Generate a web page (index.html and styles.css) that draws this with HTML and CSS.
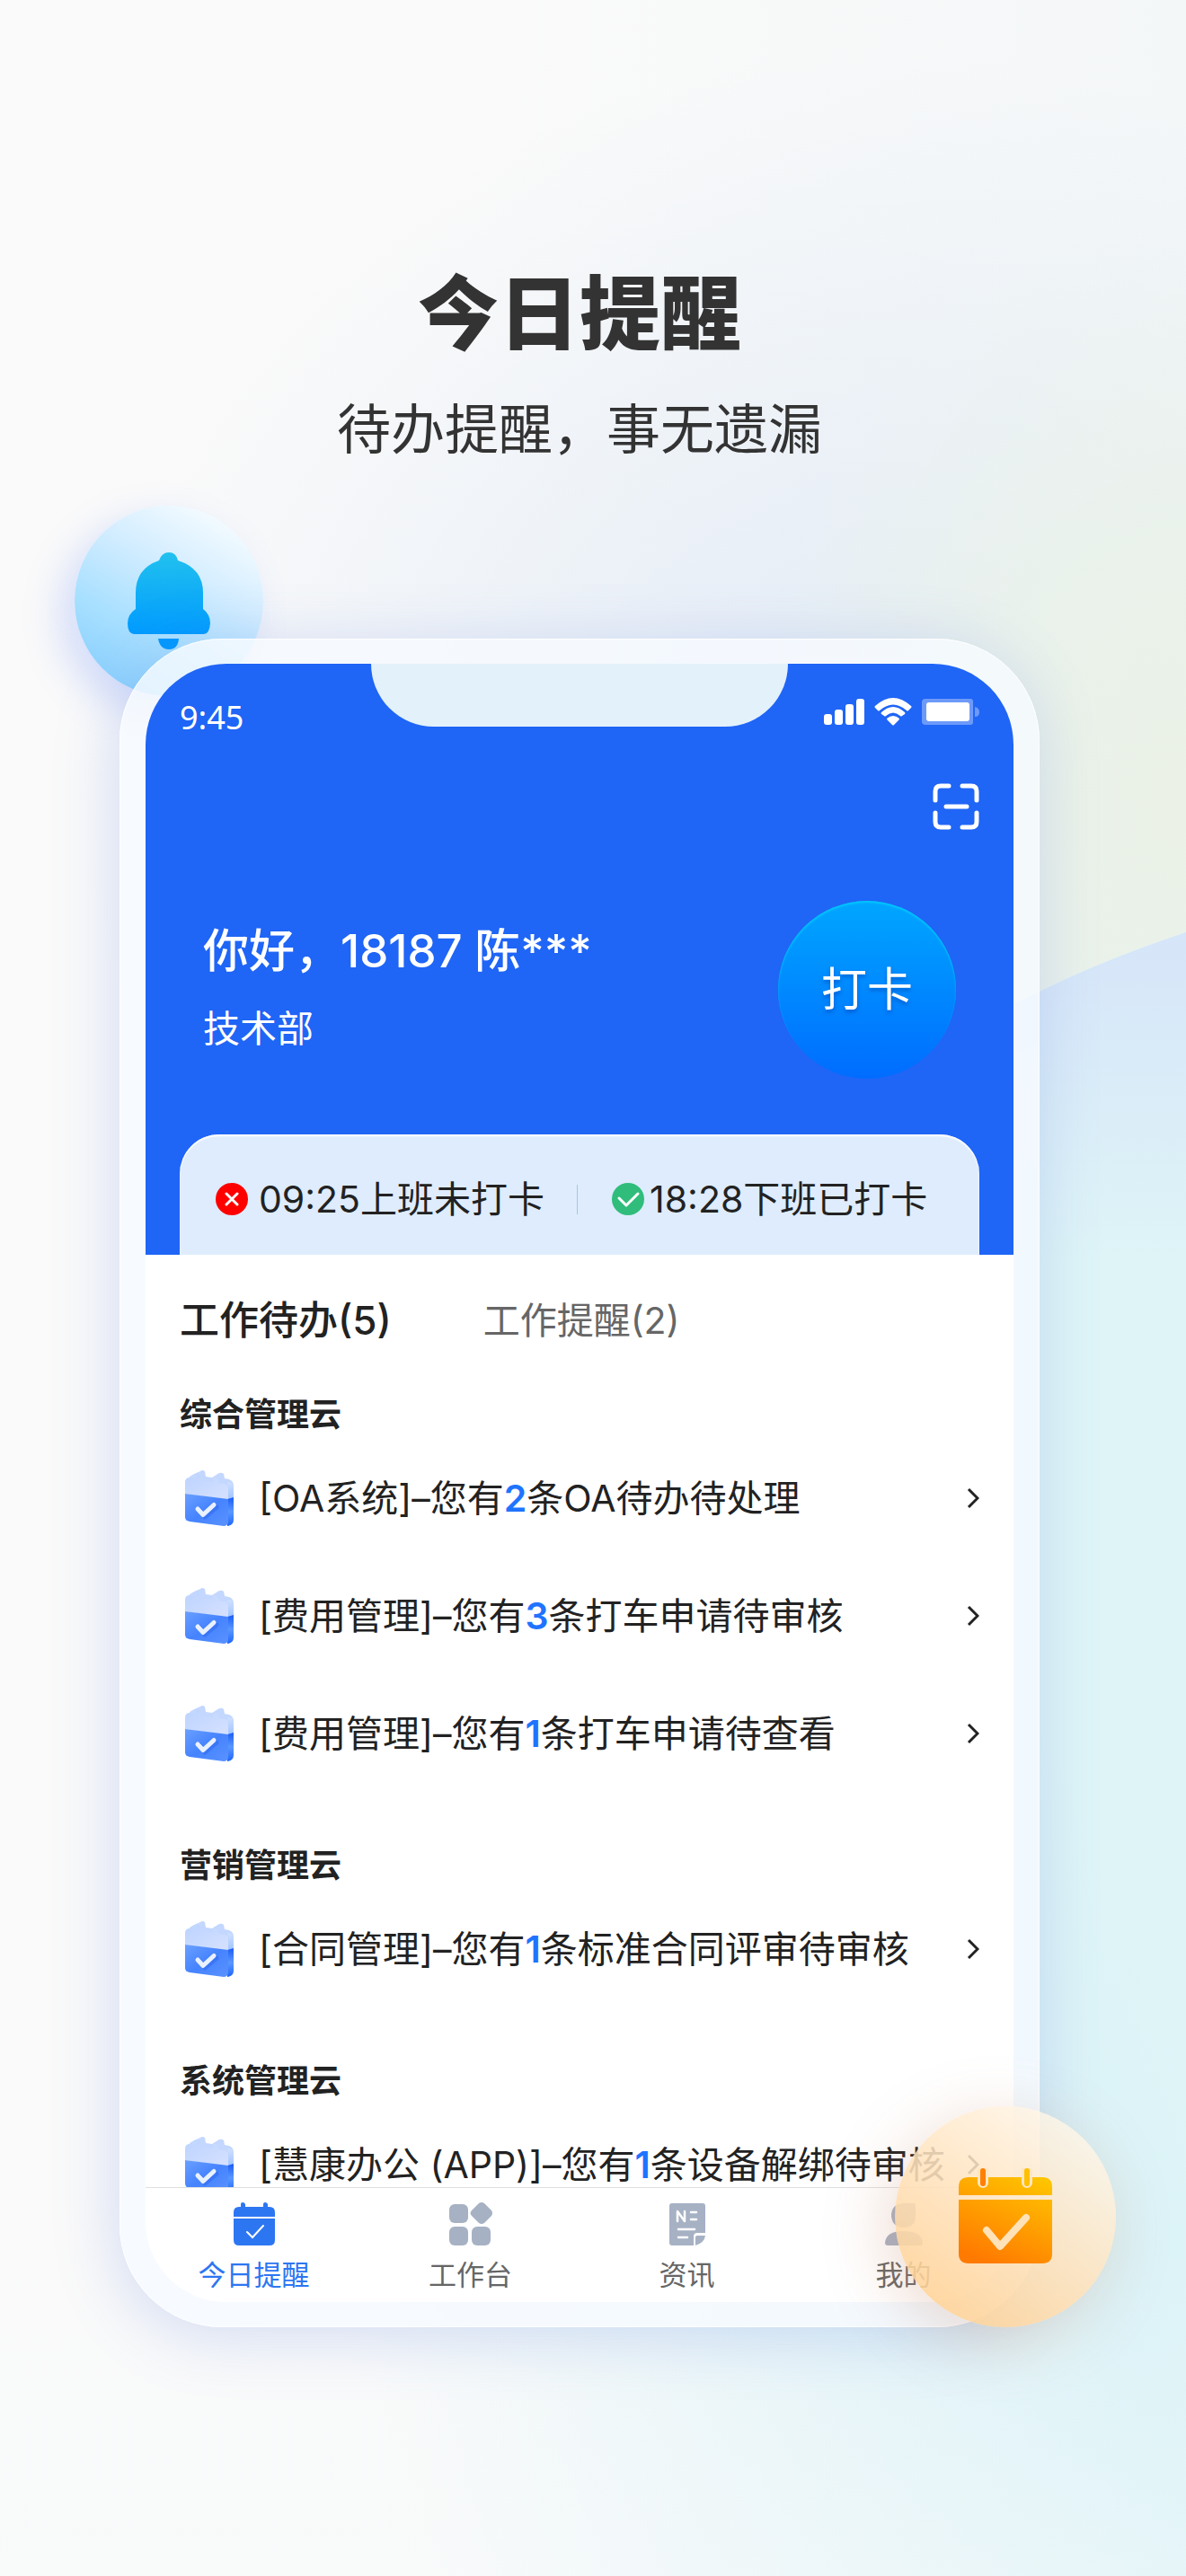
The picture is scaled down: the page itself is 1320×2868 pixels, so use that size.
FILE: index.html
```html
<!DOCTYPE html>
<html lang="zh-CN">
<head>
<meta charset="utf-8">
<meta name="viewport" content="width=device-width, initial-scale=1">
<title>今日提醒</title>
<link rel="stylesheet" href="styles.css">
</head>
<body>
<svg class="defs" width="0" height="0" aria-hidden="true">
  <defs>
    <linearGradient id="gTop" x1="0" y1="0" x2="1" y2="1"><stop offset="0" stop-color="#bcd3ff"/><stop offset="1" stop-color="#d6e1ff"/></linearGradient>
    <linearGradient id="gFront" x1="0" y1="0" x2="1" y2="1"><stop offset="0" stop-color="#6ba0ff"/><stop offset=".5" stop-color="#4583ff"/><stop offset="1" stop-color="#5a92ff"/></linearGradient>
    <linearGradient id="gSide" x1="0" y1="0" x2="0" y2="1"><stop offset="0" stop-color="#1b5cf5"/><stop offset=".5" stop-color="#5a98ff"/><stop offset="1" stop-color="#1f66fb"/></linearGradient>
    <linearGradient id="gSideTop" x1="0" y1="0" x2="0" y2="1"><stop offset="0" stop-color="#cfe0ff"/><stop offset="1" stop-color="#9fc3ff"/></linearGradient>
    <linearGradient id="gBell" x1="0" y1="0" x2="0" y2="1"><stop offset="0" stop-color="#22c1ee"/><stop offset="1" stop-color="#009bff"/></linearGradient>
    <linearGradient id="gCal" gradientUnits="userSpaceOnUse" x1="80" y1="6" x2="36" y2="106"><stop offset="0" stop-color="#ffc400"/><stop offset="1" stop-color="#ff7a00"/></linearGradient>
  </defs>
  <symbol id="todo" viewBox="0 0 54 62">
    <path d="M5 7 10 4 17 1Q19-1 22 1L23 7 30 8 38 3Q41 2 43 4L44 9 49 10Q54 12 54 17V31L48 33 6 24Z" fill="#c3d7ff"/>
    <path d="M47 13Q54 13 54 19V31L48 33Z" fill="url(#gSideTop)"/>
    <path d="M0 13Q0 9 4 8L12 9V6Q12 3 15 4 17 5 17 9V11L31 13V10Q31 7 34 8 37 9 37 12V14L44 15Q48 16 48 20V33L0 26Z" fill="url(#gTop)"/>
    <path d="M47 32 54 30V55Q54 61 47 62Z" fill="url(#gSide)"/>
    <path d="M0 26 48 32V58Q47 62 43 62L5 57Q0 56 0 52Z" fill="url(#gFront)"/>
    <path d="M16 44 22 52 35 41" fill="none" stroke="#2b66ee" stroke-opacity=".5" stroke-width="5" stroke-linecap="round" stroke-linejoin="round"/>
    <path d="M14 43 20 49.500 32 38.500" fill="none" stroke="#e9f1ff" stroke-width="5" stroke-linecap="round" stroke-linejoin="round"/>
  </symbol>
  <symbol id="chevron" viewBox="0 0 14 24">
    <path d="M2 2 12 12 2 22" fill="none" stroke="#222" stroke-width="3"/>
  </symbol>
</svg>

<div class="poster">
  <svg class="wave" viewBox="0 0 1320 2868" preserveAspectRatio="none" aria-hidden="true">
    <defs>
      <linearGradient id="gWave" gradientUnits="userSpaceOnUse" x1="330" y1="2500" x2="1240" y2="2100"><stop offset="0" stop-color="#dbf2f7" stop-opacity="0"/><stop offset=".8" stop-color="#dbf2f7"/><stop offset="1" stop-color="#def4f7"/></linearGradient>
      <linearGradient id="gWaveTop" x1="0" y1="0" x2="0" y2="1"><stop offset="0" stop-color="#d6e5f9"/><stop offset="1" stop-color="#d6e5f9" stop-opacity="0"/></linearGradient>
      <linearGradient id="gWaveEnd" x1="0" y1="0" x2="0" y2="1"><stop offset="0" stop-color="#f5fafb" stop-opacity="0"/><stop offset="1" stop-color="#f5fafb" stop-opacity=".4"/></linearGradient>
    </defs>
    <path d="M200 2868V1700Q900 1230 1157 1104 1230 1068 1320 1038V2868Z" fill="url(#gWave)"/>
    <path d="M1000 1400V1190Q1080 1140 1157 1104 1230 1068 1320 1038V1400Z" fill="url(#gWaveTop)"/>
    <path d="M0 2500H1320V2868H0Z" fill="url(#gWaveEnd)"/>
  </svg>

  <header class="intro">
    <h1>今日提醒</h1>
    <p>待办提醒，事无遗漏</p>
  </header>

  <main class="stage">
    <div class="badge badge-bell">
      <svg width="92" height="108" viewBox="0 0 92 108" aria-hidden="true">
        <path d="M35 9Q38 0 46 0T56 9Q84 18 84 45V63Q92 69 92 79 91 91 85 91H7Q0 90 0 79 0 69 9 63V45Q9 18 35 9Z" fill="url(#gBell)"/>
        <path d="M34 96H57Q56 108 46 108T34 96Z" fill="#0099ff"/>
      </svg>
    </div>

    <div class="phone">
      <div class="screen">
        <div class="notch"></div>
        <section class="hero">
          <div class="status">
            <span class="time">9:45</span>
            <svg width="174" height="32" viewBox="0 0 174 32" fill="#fff" aria-hidden="true">
              <rect x="1" y="18" width="9" height="12" rx="3"/><rect x="13" y="13" width="9" height="17" rx="3"/><rect x="25" y="7" width="9" height="23" rx="3"/><rect x="37" y="1" width="9" height="29" rx="3"/>
              <path d="M58 9Q78-9 98 9 99 10 98 11L95 14Q94 15 93 14 78 1 63 14 62 15 61 14L58 11Q57 10 58 9Z"/>
              <path d="M65 16Q78 4 91 16 92 17 91 18L88 20Q87 21 86 20 78 13 70 20 69 21 68 20L65 18Q64 17 65 16Z"/>
              <path d="M71 23Q78 17 85 23 85 24 84 25L79 30Q78 31 77 30L72 25Q71 24 71 23Z"/>
              <path d="M114 1H164Q167 1 167 4V27Q167 30 164 30H114Q110 30 110 26V5Q110 1 114 1Z" opacity=".35"/>
              <path d="M169 10Q174 11 174 16T169 21Z" opacity=".35"/>
              <rect x="115" y="5" width="48" height="21" rx="3"/>
            </svg>
          </div>
          <button class="scan" type="button" aria-label="扫一扫">
            <svg width="52" height="52" viewBox="0 0 52 52" fill="none" stroke="#fff" stroke-width="5" stroke-linecap="round" aria-hidden="true">
              <path d="M18 3H9Q3 3 3 9V19M33 3H43Q49 3 49 9V19M3 33V43Q3 49 9 49H18M33 49H43Q49 49 49 43V33M15 26H38"/>
            </svg>
          </button>
          <div class="greet">
            <div class="who">
              <p class="name">你好，18187 陈***</p>
              <p class="dept">技术部</p>
            </div>
            <button class="punch" type="button">打卡</button>
          </div>
          <div class="shifts">
            <div class="shift">
              <svg width="36" height="36" viewBox="0 0 36 36" aria-hidden="true"><circle cx="18" cy="18" r="18" fill="#fe0000"/><path d="M12 12 24 24M24 12 12 24" stroke="#fff" stroke-width="3" stroke-linecap="round"/></svg>
              <span>09:25上班未打卡</span>
            </div>
            <div class="shift done">
              <svg width="36" height="36" viewBox="0 0 36 36" aria-hidden="true"><circle cx="18" cy="18" r="18" fill="#30bd7b"/><path d="M8 17 16 25 29 12" fill="none" stroke="#fff" stroke-width="3" stroke-linecap="round" stroke-linejoin="round"/></svg>
              <span>18:28下班已打卡</span>
            </div>
          </div>
        </section>

        <div class="tabs" role="tablist">
          <button class="tab active" type="button" role="tab" aria-selected="true">工作待办(5)</button>
          <button class="tab" type="button" role="tab" aria-selected="false">工作提醒(2)</button>
        </div>

        <div class="groups">
          <section class="group">
            <h2>综合管理云</h2>
            <a class="row" href="#"><svg class="todo"><use href="#todo"/></svg><span>[OA系统]–您有<b>2</b>条OA待办待处理</span><svg class="chev"><use href="#chevron"/></svg></a>
            <a class="row" href="#"><svg class="todo"><use href="#todo"/></svg><span>[费用管理]–您有<b>3</b>条打车申请待审核</span><svg class="chev"><use href="#chevron"/></svg></a>
            <a class="row" href="#"><svg class="todo"><use href="#todo"/></svg><span>[费用管理]–您有<b>1</b>条打车申请待查看</span><svg class="chev"><use href="#chevron"/></svg></a>
          </section>
          <section class="group">
            <h2>营销管理云</h2>
            <a class="row" href="#"><svg class="todo"><use href="#todo"/></svg><span>[合同管理]–您有<b>1</b>条标准合同评审待审核</span><svg class="chev"><use href="#chevron"/></svg></a>
          </section>
          <section class="group">
            <h2>系统管理云</h2>
            <a class="row" href="#"><svg class="todo"><use href="#todo"/></svg><span>[慧康办公 (APP)]–您有<b>1</b>条设备解绑待审核</span><svg class="chev"><use href="#chevron"/></svg></a>
          </section>
        </div>

        <nav class="tabbar">
          <a class="item current" href="#">
            <svg width="50" height="50" viewBox="0 0 50 50" fill="#2d76f2" aria-hidden="true"><path d="M2 17V12Q2 6 8 6H10V3Q10 1 12 1T15 3V6H35V3Q35 1 37 1T40 3V6H42Q48 6 48 12V17Z"/><path d="M2 19H48V43Q48 49 42 49H8Q2 49 2 43Z"/><path d="M17 34 23 40 35 27" fill="none" stroke="#fff" stroke-width="2" stroke-linecap="round"/></svg>
            <span>今日提醒</span>
          </a>
          <a class="item" href="#">
            <svg width="50" height="50" viewBox="0 0 50 50" fill="#a7b1c4" aria-hidden="true"><rect x="1" y="3" width="21" height="21" rx="6"/><rect x="1" y="28" width="21" height="21" rx="6"/><rect x="26" y="28" width="21" height="21" rx="6"/><path d="M34 2Q37 0 40 2L48 10Q50 13 48 16L40 24Q37 26 34 24L26 16Q23 13 26 10Z"/></svg>
            <span>工作台</span>
          </a>
          <a class="item" href="#">
            <svg width="50" height="50" viewBox="0 0 50 50" fill="#a7b1c4" aria-hidden="true"><path d="M8 2H42Q45 2 45 5V35H36Q32 35 32 39V49H8Q5 49 5 46V5Q5 2 8 2Z"/><path d="M34 49V40Q34 38 36 38H45Q44 46 34 49Z"/><path d="M14 22V11L22 22V11M29 12H35M29 20H35M15 31H33M15 40H25" fill="none" stroke="#fff" stroke-width="2.500" stroke-linecap="round" stroke-linejoin="round"/></svg>
            <span>资讯</span>
          </a>
          <a class="item" href="#">
            <svg width="50" height="50" viewBox="0 0 50 50" fill="#a7b1c4" aria-hidden="true"><path d="M24 2H36Q38 2 38 4V16Q38 29 25 29 12 29 11 16 11 3 24 2Z"/><path d="M4 46Q5 33 25 33T46 46Q46 49 43 49H7Q4 49 4 46Z"/></svg>
            <span>我的</span>
          </a>
        </nav>
      </div>
    </div>

    <div class="badge badge-cal">
      <svg width="106" height="108" viewBox="0 0 106 108" aria-hidden="true">
        <path d="M1 30V21Q1 10 12 10H94Q105 10 105 21V30Z" fill="url(#gCal)"/>
        <path d="M1 35H105V95Q105 106 94 106H12Q1 106 1 95Z" fill="url(#gCal)"/>
        <path d="M28 4V16M77 4V16" stroke="#ffe6c2" stroke-width="12" stroke-linecap="round"/>
        <path d="M28 3V17" stroke="#ff8000" stroke-width="6" stroke-linecap="round"/>
        <path d="M77 3V17" stroke="#ffc000" stroke-width="6" stroke-linecap="round"/>
        <path d="M32 69 47 87 76 55" fill="none" stroke="#ffe2b8" stroke-width="8" stroke-linecap="round" stroke-linejoin="round"/>
      </svg>
    </div>
  </main>
</div>
</body>
</html>
```
FILE: styles.css
```css
* { box-sizing: border-box; margin: 0; padding: 0; }

body {
  font-family: Inter, "Noto Sans CJK SC", sans-serif;
  color: #222;
  background: #fafafa;
}

button { font: inherit; color: inherit; background: none; border: 0; }
a { color: inherit; text-decoration: none; }
svg { display: block; flex: none; }
.defs { position: absolute; }

.poster {
  position: relative;
  isolation: isolate;
  overflow: hidden;
  min-height: 100vh;
  padding: 300px 163px 260px 133px;
  background:
    radial-gradient(ellipse 480px 640px at 100% 31%, #ebf1e6 0%, rgba(234, 242, 234, .9) 45%, rgba(234, 242, 240, 0) 100%),
    radial-gradient(ellipse 900px 800px at 75% 30%, #e2ebf6 0%, rgba(226, 235, 246, 0) 100%),
    linear-gradient(90deg, #fafafa 40%, #f4f7f8 100%);
}
.wave { position: absolute; inset: 0; z-index: -1; width: 100%; height: 100%; }

.intro { display: grid; gap: 38px; color: #333; text-align: center; }
.intro h1 { font-size: 90px; line-height: 100px; font-weight: 900; }
.intro p { font-size: 60px; line-height: 80px; }

.stage { position: relative; margin-top: 193px; }

.badge { position: absolute; display: grid; place-items: center; border-radius: 50%; }
.badge-bell {
  left: -50px;
  top: -148px;
  width: 210px;
  height: 212px;
  background: linear-gradient(30deg, #88cffd 8%, #a9e0ff 35%, #d3edff 62%, #f6fcff 90%);
  box-shadow: -16px 16px 44px rgba(90, 130, 250, .24);
}
.badge-cal {
  right: -85px;
  bottom: 0;
  width: 246px;
  height: 246px;
  background: linear-gradient(35deg, rgba(255, 208, 146, .88) 10%, rgba(255, 225, 186, .88) 45%, rgba(255, 244, 228, .82) 85%);
  box-shadow: -10px 14px 70px rgba(200, 140, 110, .3);
}

.phone {
  position: relative;
  padding: 28px 29px;
  border-radius: 114px;
  background: rgba(246, 250, 255, .82);
  box-shadow: inset 0 0 0 1px rgba(255, 255, 255, .8), -4px 10px 70px rgba(90, 125, 220, .24);
}
.screen { position: relative; overflow: hidden; border-radius: 90px; background: #fff; }
.notch {
  position: absolute;
  top: 0;
  left: 26%;
  right: 26%;
  height: 70px;
  border-radius: 0 0 70px 70px;
  background: #e3f1fa;
}

.hero {
  display: flex;
  flex-direction: column;
  padding: 38px 38px 0;
  color: #fff;
  background: #1f65f6;
}
.status { display: flex; justify-content: space-between; align-items: flex-start; }
.time { font-family: "Noto Sans", sans-serif; font-size: 36px; line-height: 44px; }
.scan { align-self: flex-end; margin-top: 51px; }
.greet {
  display: flex;
  justify-content: space-between;
  align-items: flex-start;
  margin-top: 79px;
  padding: 0 26px;
}
.who { display: grid; gap: 29px; padding-top: 24px; }
.name { font-size: 51px; line-height: 64px; font-weight: 500; }
.dept { font-size: 41px; line-height: 50px; }
.punch {
  width: 198px;
  height: 198px;
  border-radius: 50%;
  font-size: 51px;
  line-height: 60px;
  text-shadow: 0 3px 4px rgba(0, 60, 170, .5);
  background: linear-gradient(#00a6ff, #006cff);
  box-shadow: inset 0 2px 2px #00c6ff;
}

.shifts {
  display: flex;
  align-items: center;
  height: 134px;
  margin-top: 62px;
  padding: 10px 0 0 40px;
  border-radius: 44px 44px 0 0;
  color: #222;
  background: #deecfd;
  box-shadow: inset 0 2px 2px #fff;
}
.shift { display: flex; align-items: center; gap: 12px; font-size: 41px; line-height: 50px; }
.done { gap: 6px; }
.done::before { content: ""; width: 1px; height: 33px; margin: 0 32px 0 36px; background: #a9c3ee; }

.tabs { display: flex; gap: 102px; padding: 43px 38px 0; }
.tab { font-size: 41px; line-height: 60px; color: #666; }
.tab.active { font-size: 44px; font-weight: 500; color: #222; }

.groups { display: grid; gap: 55px; padding: 48px 38px 0; margin-bottom: -40px; }
.group h2 { font-size: 36px; line-height: 54px; font-weight: 700; }
.row { display: flex; align-items: center; height: 131px; padding-left: 6px; font-size: 41px; line-height: 60px; }
.row span { flex: 1; margin-left: 28px; white-space: nowrap; }
.row b { font-weight: 600; color: #1f74ff; }
.todo { width: 54px; height: 62px; }
.chev { width: 14px; height: 24px; }

.tabbar {
  position: relative;
  display: grid;
  grid-template-columns: repeat(4, 1fr);
  height: 128px;
  padding: 15px 2px 0 0;
  border-top: 1px solid #e0e0e0;
  background: #fff;
}
.item { display: flex; flex-direction: column; align-items: center; gap: 12px; font-size: 31px; line-height: 40px; color: #666; }
.current { color: #2d76f2; }
```
